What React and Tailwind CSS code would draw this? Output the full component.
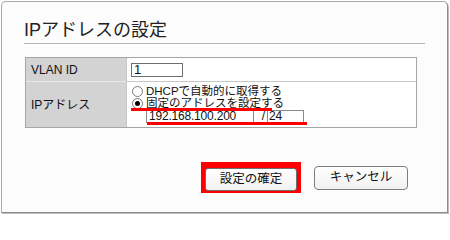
import React from 'react';

const font = { fontFamily: '"Liberation Sans", "Noto Sans CJK JP", sans-serif' };

const Radio = ({ checked, label }) => (
    <div className="flex items-center h-[12px] gap-[3px]">
        <span className="w-[11px] h-[11px] rounded-full border border-[#7a7a7a] bg-white flex items-center justify-center">
            {checked && <span className="w-[5px] h-[5px] rounded-full bg-black" />}
        </span>
        <span className="text-[11.5px] leading-[12px] text-[#111]">{label}</span>
    </div>
);

const App = () => {
    return (
        <div className="w-[450px] h-[215px] bg-white p-px" style={font}>
            <div className="h-[212px] w-[447px] border border-[#a9a9a9] border-r-[#8c8c8c] border-b-[#8c8c8c] rounded-t-[5px] bg-[#fcfcfc] shadow-[1px_1px_0_#bdbdbd]">
                <h1 className="mt-[16px] ml-[22px] h-[24px] leading-[24px] text-[18px] text-[#222] font-normal">IPアドレスの設定</h1>
                <div className="ml-[22px] mt-[1px] w-[401px] border-t border-[#b4b4b4]" />

                <div className="ml-[23px] mt-[13px] w-[392px] border border-[#a6a6a6] grid grid-cols-[100px_1fr] text-[12px] text-[#111]">
                    <div className="h-[24px] bg-[#d3d3d3] border-b border-[#e8e8e8] flex items-center pl-[5px]">VLAN ID</div>
                    <div className="h-[24px] bg-white border-b border-l border-[#c6c6c6] flex items-center pl-[4px]">
                        <div className="w-[52px] h-[14px] border border-[#6e6e6e] bg-white text-[13px] leading-[12px] pl-[2px]">1</div>
                    </div>
                    <div className="h-[45px] bg-[#d3d3d3] flex items-center pl-[5px]">IPアドレス</div>
                    <div className="relative h-[45px] bg-white border-l border-[#c6c6c6] pl-[5px] pt-[3px]">
                        <Radio label="DHCPで自動的に取得する" />
                        <Radio checked label="固定のアドレスを設定する" />
                        <div className="ml-[14px] mt-[1px] w-[158px] h-[13px] border border-[#8a8a8a] flex text-[12px] leading-[11px] tracking-[-0.2px]">
                            <span className="w-[107px] border-r border-[#8a8a8a] pl-[2px]">192.168.100.200</span>
                            <span className="w-[14px] border-r border-[#8a8a8a] text-right pr-[2px]">/</span>
                            <span className="flex-1 pl-[1px]">24</span>
                        </div>
                        <span className="absolute left-[4px] top-[26px] w-[141px] h-[3px] bg-[#f00]" />
                        <span className="absolute left-[20px] top-[40px] w-[160px] h-[3px] bg-[#f00]" />
                    </div>
                </div>

                <div className="mt-[34px] pl-[199px] flex items-center gap-[13px]">
                    <div className="w-[100px] h-[31px] border-[4px] border-[#f00] bg-[#f00]">
                        <button className="w-full h-full rounded-[3px] border border-[#6f6f6f] bg-gradient-to-b from-white to-[#f1f1f1] text-[12.5px] text-[#111]">設定の確定</button>
                    </div>
                    <button className="w-[94px] h-[24px] rounded-[4px] border border-[#7d7d7d] bg-gradient-to-b from-white to-[#f1f1f1] text-[12.5px] text-[#111]">キャンセル</button>
                </div>
            </div>
        </div>
    );
};

export default App;
